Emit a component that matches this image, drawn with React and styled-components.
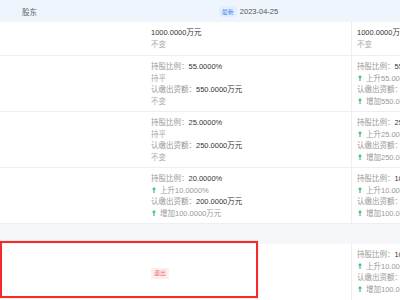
import React from 'react';
import styled, { createGlobalStyle } from 'styled-components';

const GlobalStyle = createGlobalStyle`
    body {
        margin: 0;
        background: #fff;
        font-family: "Liberation Sans", "Noto Sans CJK SC", sans-serif;
    }
`;

const Table = styled.div`
    position: relative;
    width: 400px;
    height: 300px;
    overflow: hidden;
    font-size: 7.5px;
`;

const Row = styled.div`
    display: grid;
    grid-template-columns: 146px 205px 205px;
    border-bottom: 1px solid #ebeef5;
    box-sizing: border-box;
    height: ${p => p.$height}px;
`;

const HeaderRow = styled(Row)`
    background: #eef5fd;
    border-bottom: none;
    align-items: center;
`;

const Band = styled.div`
    height: 20px;
    background: #f5f7fa;
`;

const HeadName = styled.div`
    padding-left: 22px;
    color: #606266;
`;

const HeadDate = styled.div`
    display: flex;
    align-items: center;
    justify-content: center;
    gap: 3px;
    color: #555;
`;

const Tag = styled.span`
    display: inline-flex;
    align-items: center;
    height: 11px;
    padding: 0 3px;
    font-size: 6px;
    border-radius: 1px;
    color: ${p => p.$tone === 'red' ? '#f56c6c' : '#3f82e6'};
    background: ${p => p.$tone === 'red' ? '#fdeeee' : '#e3efff'};
`;

const Cell = styled.div`
    padding: 5px;
    line-height: 11.5px;
    white-space: nowrap;
    overflow: hidden;
    border-left: ${p => p.$divider ? '1px solid #ebeef5' : 'none'};
    display: ${p => p.$center ? 'flex' : 'block'};
    align-items: center;
`;

const Line = styled.div`
    color: #999;
    display: flex;
    align-items: center;
`;

const Value = styled.span`
    color: #333;
`;

const Muted = styled.span`
    color: #aaa;
`;

const Arrow = styled.svg`
    width: 4px;
    height: 6px;
    margin: 0 4px 0 1px;
    flex: none;
`;

const Highlight = styled.div`
    position: absolute;
    left: 0;
    top: 241px;
    width: 258px;
    height: 57px;
    box-sizing: border-box;
    border: 2px solid #f52a2a;
    box-shadow: 0 0 1px rgba(245, 42, 42, 0.5);
`;

const UpArrow = () => (
    <Arrow viewBox="0 0 4 6">
        <path d="M2 0 L4 2.6 L2.6 2.6 L2.6 6 L1.4 6 L1.4 2.6 L0 2.6 Z" fill="#3dbb72" />
    </Arrow>
);

const cellLines = (ratio, ratioNote, amount, amountNote) => [
    { label: '持股比例：', value: ratio },
    ratioNote,
    { label: '认缴出资额：', value: amount },
    amountNote,
];

const rows = [
    {
        old: cellLines('55.0000%', { muted: '持平' }, '550.0000万元', { muted: '不变' }),
        now: cellLines('55.0000%', { up: '上升55.0000%' }, '550.0000万元', { up: '增加550.0000万元' }),
    },
    {
        old: cellLines('25.0000%', { muted: '持平' }, '250.0000万元', { muted: '不变' }),
        now: cellLines('25.0000%', { up: '上升25.0000%' }, '250.0000万元', { up: '增加250.0000万元' }),
    },
    {
        old: cellLines('20.0000%', { up: '上升10.0000%' }, '200.0000万元', { up: '增加100.0000万元' }),
        now: cellLines('10.0000%', { up: '上升10.0000%' }, '100.0000万元', { up: '增加100.0000万元' }),
    },
];

function Lines({ items }) {
    return items.map((it, i) => {
        if (it.up) return <Line key={i}><UpArrow />{it.up}</Line>;
        if (it.muted) return <Line key={i}><Muted>{it.muted}</Muted></Line>;
        return <Line key={i}>{it.label}<Value>{it.value}</Value></Line>;
    });
}

export default function App() {
    return (
        <>
            <GlobalStyle />
            <Table>
                <HeaderRow $height={22}>
                    <HeadName>股东</HeadName>
                    <HeadDate>
                        <Tag>最新</Tag>
                        2023-04-25
                    </HeadDate>
                    <div />
                </HeaderRow>
                <Row $height={34}>
                    <Cell />
                    <Cell>
                        <Line><Value>1000.0000万元</Value></Line>
                        <Line><Muted>不变</Muted></Line>
                    </Cell>
                    <Cell $divider>
                        <Line><Value>1000.0000万元</Value></Line>
                        <Line><Muted>不变</Muted></Line>
                    </Cell>
                </Row>
                {rows.map((r, i) => (
                    <Row key={i} $height={56}>
                        <Cell />
                        <Cell><Lines items={r.old} /></Cell>
                        <Cell $divider><Lines items={r.now} /></Cell>
                    </Row>
                ))}
                <Band />
                <Row $height={60}>
                    <Cell />
                    <Cell $center>
                        <Tag $tone="red">退出</Tag>
                    </Cell>
                    <Cell $divider>
                        <Lines items={cellLines('10.0000%', { up: '上升10.0000%' }, '100.0000万元', { up: '增加100.0000万元' })} />
                    </Cell>
                </Row>
                <Highlight />
            </Table>
        </>
    );
}
